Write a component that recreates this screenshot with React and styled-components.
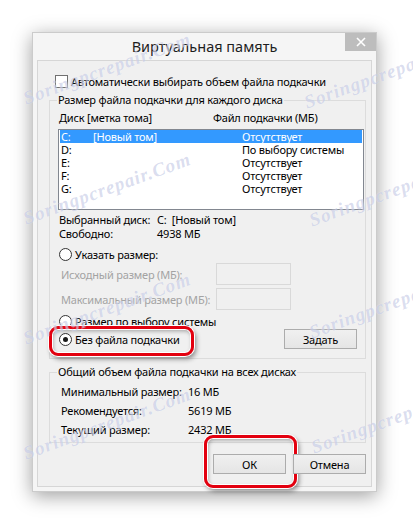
import React from 'react'
import styled, { createGlobalStyle } from 'styled-components'

const GlobalStyle = createGlobalStyle`
  html, body {
    margin: 0;
    background: #fff;
  }
  body {
    font-family: "Noto Sans", "Open Sans", sans-serif;
    font-size: 11px;
    letter-spacing: -0.2px;
    color: #000;
  }
`

const Page = styled.div`
  position: relative;
  width: 413px;
  height: 524px;
  padding: 32px 0 0 32px;
  box-sizing: border-box;
  overflow: hidden;
`

const Window = styled.div`
  width: 345px;
  height: 460px;
  box-sizing: border-box;
  background: #f5f5f5;
  border: 1px solid #cbcbcb;
  box-shadow: 0 4px 18px rgba(0, 0, 0, 0.38);
  display: flex;
  flex-direction: column;
`

const TitleBar = styled.div`
  height: 27px;
  display: grid;
  grid-template-columns: 1fr auto 1fr;
  align-items: start;
`

const Title = styled.div`
  grid-column: 2;
  font-size: 14.5px;
  letter-spacing: 0;
  line-height: 27px;
  color: #1e1e1e;
`

const CloseBtn = styled.div`
  grid-column: 3;
  justify-self: end;
  width: 31px;
  height: 18px;
  background: #bdbdbd;
  display: flex;
  align-items: center;
  justify-content: center;
`

const Body = styled.div`
  flex: 1;
  margin: 0 4px 4px 4px;
  border: 1px solid #d6d6d6;
  background: #f0f0f0;
  padding: 14px 5px 0 11px;
  display: flex;
  flex-direction: column;
`

const CheckRow = styled.label`
  display: flex;
  align-items: center;
  gap: 3px;
  margin-left: 6px;
  height: 13px;
`

const CheckBox = styled.span`
  width: 11px;
  height: 11px;
  border: 1px solid #707070;
  background: #fff;
`

const Group = styled.fieldset`
  margin: ${p => p.top}px 0 0 0;
  padding: 0;
  border: 1px solid #dcdcdc;
  height: ${p => p.h}px;
  box-sizing: border-box;
  min-width: 0;
`

const Legend = styled.legend`
  margin-left: 7px;
  padding: 0 1px;
  line-height: 14px;
`

const Headers = styled.div`
  display: grid;
  grid-template-columns: 154px 1fr;
  padding-left: 9px;
  margin-top: 4px;
  line-height: 14px;
`

const ListBox = styled.div`
  margin: 4px 1px 0 8px;
  height: 81px;
  box-sizing: border-box;
  background: #fff;
  border: 1px solid #828790;
  padding: 0 1px;
`

const ListRow = styled.div`
  display: grid;
  grid-template-columns: 32px 149px 1fr;
  height: 13px;
  line-height: 13px;
  padding-left: 1px;
  background: ${p => (p.selected ? '#3399ff' : 'transparent')};
  color: ${p => (p.selected ? '#fff' : '#000')};
`

const InfoGrid = styled.div`
  display: grid;
  grid-template-columns: ${p => p.col}px 1fr;
  padding-left: ${p => p.left}px;
  margin-top: ${p => p.top}px;
  row-gap: ${p => p.gap}px;
  line-height: 14px;
`

const RadioRow = styled.label`
  position: relative;
  display: flex;
  align-items: center;
  gap: 3px;
  height: 14px;
  margin-left: 9px;
  margin-top: ${p => p.top}px;
  width: fit-content;
`

const Radio = styled.span`
  width: 11px;
  height: 11px;
  border-radius: 50%;
  border: 1px solid #333;
  background: #fff;
  display: flex;
  align-items: center;
  justify-content: center;
  &::after {
    content: '';
    width: 5px;
    height: 5px;
    border-radius: 50%;
    background: ${p => (p.checked ? '#1a1a1a' : 'transparent')};
  }
`

const SizeRow = styled.div`
  display: grid;
  grid-template-columns: 155px 75px;
  align-items: center;
  padding-left: 11px;
  margin-top: ${p => p.top}px;
  color: #a3a3a3;
`

const TextField = styled.div`
  height: 22px;
  box-sizing: border-box;
  border: 1px solid #d9d9d9;
  background: #f0f0f0;
`

const BottomLine = styled.div`
  display: flex;
  align-items: center;
  justify-content: space-between;
  margin-top: 1px;
  padding-right: 8px;
`

const Button = styled.div`
  position: relative;
  width: 73px;
  height: 20px;
  box-sizing: border-box;
  border: 1px solid #acacac;
  background: linear-gradient(#f0f0f0, #e5e5e5);
  display: flex;
  align-items: center;
  justify-content: center;
`

const Actions = styled.div`
  display: flex;
  justify-content: flex-end;
  gap: 7px;
  margin-top: 11px;
`

const Highlight = styled.span`
  position: absolute;
  top: ${p => p.t}px;
  left: ${p => p.l}px;
  right: ${p => p.r}px;
  bottom: ${p => p.b}px;
  border: 3px solid #e3000f;
  border-radius: 9px;
  box-shadow: 0 0 0 1px #fff, 2px 3px 5px rgba(0, 0, 0, 0.45),
    inset 0 0 0 1px #fff, inset 1px 2px 4px rgba(0, 0, 0, 0.35);
  pointer-events: none;
`

const Watermark = styled.div`
  position: absolute;
  left: ${p => p.x}px;
  top: ${p => p.y}px;
  font-family: "Liberation Serif", serif;
  font-style: italic;
  font-weight: bold;
  font-size: 19px;
  letter-spacing: 1px;
  color: rgba(140, 150, 205, 0.32);
  text-shadow: 0 0 1px rgba(255, 255, 255, 0.6);
  transform: rotate(-20deg);
  transform-origin: left center;
  white-space: nowrap;
  pointer-events: none;
`

const drives = [
  ['C:', '[Новый том]', 'Отсутствует'],
  ['D:', '', 'По выбору системы'],
  ['E:', '', 'Отсутствует'],
  ['F:', '', 'Отсутствует'],
  ['G:', '', 'Отсутствует'],
]

const marks = [
  [24, 88], [305, 92], [24, 208], [310, 210], [24, 328], [310, 322], [24, 443], [312, 437],
]

export default function App() {
  return (
    <Page>
      <GlobalStyle />
      <Window>
        <TitleBar>
          <Title>Виртуальная память</Title>
          <CloseBtn>
            <svg width="10" height="10" viewBox="0 0 10 10">
              <path d="M1 1L9 9M9 1L1 9" stroke="#fff" strokeWidth="1.6" />
            </svg>
          </CloseBtn>
        </TitleBar>
        <Body>
          <CheckRow>
            <CheckBox />
            Автоматически выбирать объем файла подкачки
          </CheckRow>

          <Group top={5} h={266}>
            <Legend>Размер файла подкачки для каждого диска</Legend>
            <Headers>
              <span>Диск [метка тома]</span>
              <span>Файл подкачки (МБ)</span>
            </Headers>
            <ListBox>
              {drives.map((d, i) => (
                <ListRow key={d[0]} selected={i === 0}>
                  <span>{d[0]}</span>
                  <span>{d[1]}</span>
                  <span>{d[2]}</span>
                </ListRow>
              ))}
            </ListBox>
            <InfoGrid col={98} left={9} top={3} gap={0}>
              <span>Выбранный диск:</span>
              <span>C:&nbsp;&nbsp;[Новый том]</span>
              <span>Свободно:</span>
              <span>4938 МБ</span>
            </InfoGrid>
            <RadioRow top={6}>
              <Radio />
              Указать размер:
            </RadioRow>
            <SizeRow top={2}>
              <span>Исходный размер (МБ):</span>
              <TextField />
            </SizeRow>
            <SizeRow top={3}>
              <span>Максимальный размер (МБ):</span>
              <TextField />
            </SizeRow>
            <RadioRow top={4}>
              <Radio />
              Размер по выбору системы
            </RadioRow>
            <BottomLine>
              <RadioRow top={0}>
                <Radio checked />
                Без файла подкачки
                <Highlight t={-6} l={-10} r={-14} b={-10} />
              </RadioRow>
              <Button>Задать</Button>
            </BottomLine>
          </Group>

          <Group top={6} h={78}>
            <Legend>Общий объем файла подкачки на всех дисках</Legend>
            <InfoGrid col={127} left={11} top={6} gap={5}>
              <span>Минимальный размер:</span>
              <span>16 МБ</span>
              <span>Рекомендуется:</span>
              <span>5619 МБ</span>
              <span>Текущий размер:</span>
              <span>2432 МБ</span>
            </InfoGrid>
          </Group>

          <Actions>
            <Button>
              ОК
              <Highlight t={-20} l={-10} r={-12} b={-15} />
            </Button>
            <Button>Отмена</Button>
          </Actions>
        </Body>
      </Window>
      {marks.map(([x, y], i) => (
        <Watermark key={i} x={x} y={y}>
          Soringpcrepair.Com
        </Watermark>
      ))}
    </Page>
  )
}
